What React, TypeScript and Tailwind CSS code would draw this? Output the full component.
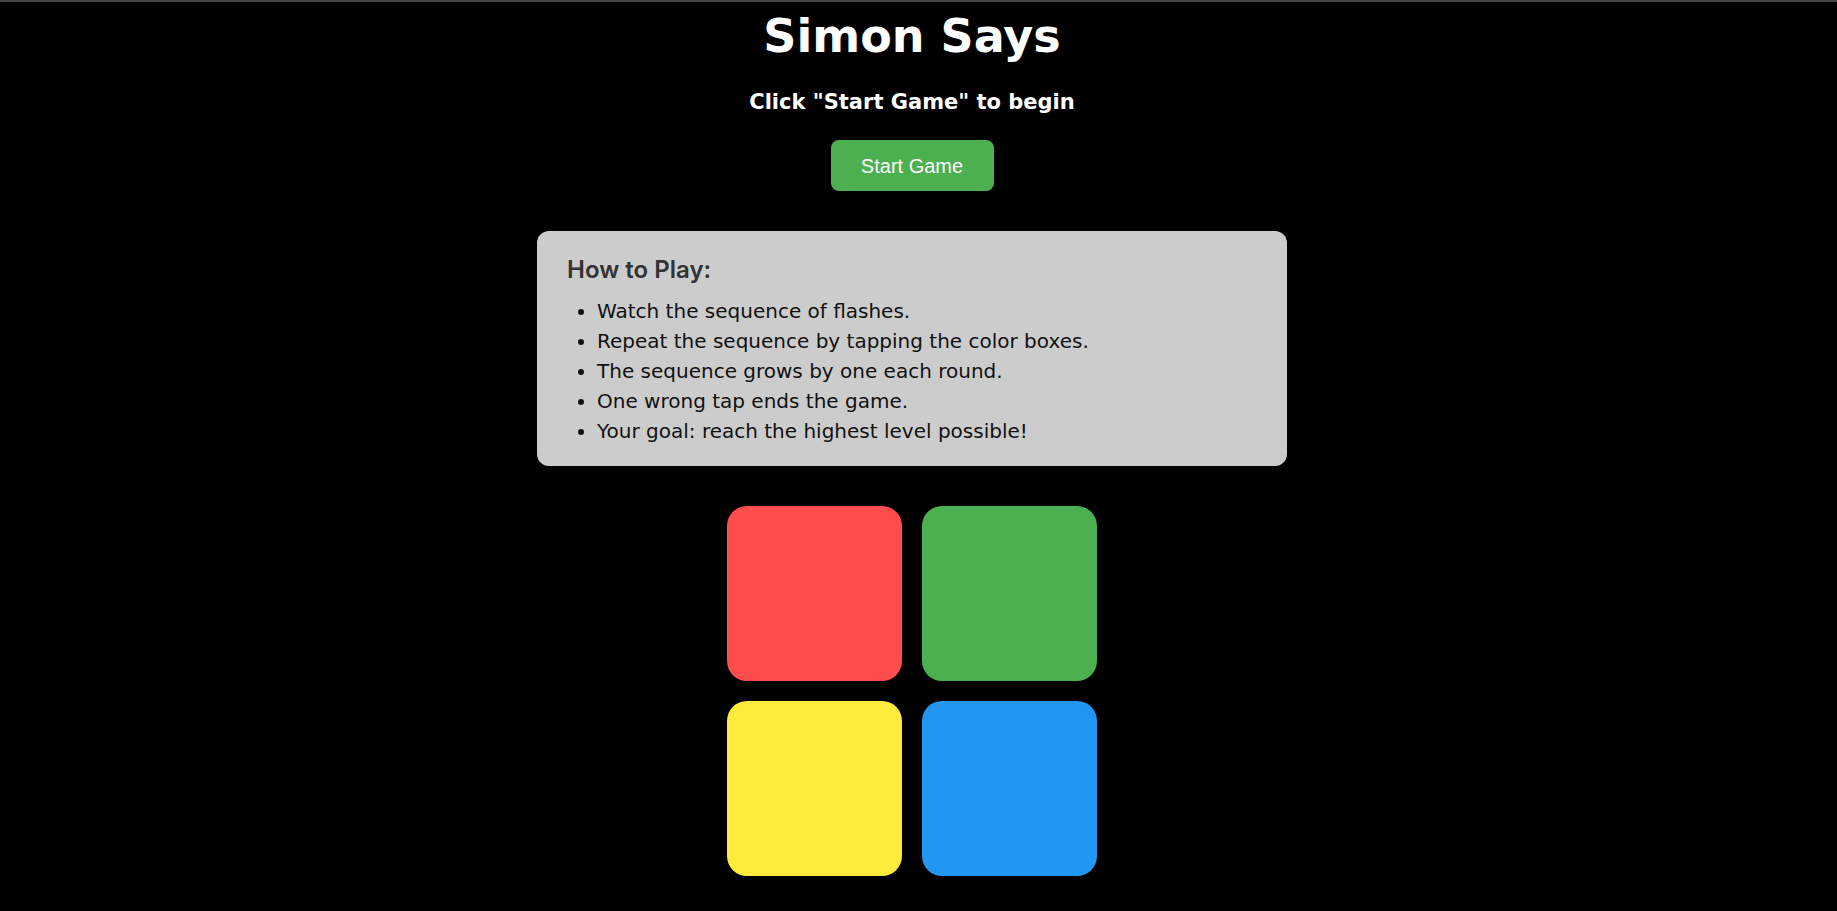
import React from 'react';

const rules = [
  'Watch the sequence of flashes.',
  'Repeat the sequence by tapping the color boxes.',
  'The sequence grows by one each round.',
  'One wrong tap ends the game.',
  'Your goal: reach the highest level possible!',
];

const pads = ['bg-[#ff4d4d]', 'bg-[#4caf50]', 'bg-[#ffeb3b]', 'bg-[#2196f3]'];

export default function App() {
  return (
    <div className="min-h-screen bg-black font-['DejaVu_Sans',sans-serif] text-white">
      <div className="h-[2px] bg-[#474747]" />
      <div className="flex flex-col items-center pr-[13px] pt-[6px]">
        <h1 className="text-[46px] font-bold leading-[56px]">Simon Says</h1>
        <h2 className="mt-[24px] text-[21px] font-bold leading-[28px]">Click "Start Game" to begin</h2>
        <button className="mt-[24px] h-[51px] w-[163px] rounded-lg bg-[#4caf50] font-['Liberation_Sans',Arial,sans-serif] text-[20px] text-white">
          Start Game
        </button>

        {/* How to play */}
        <div className="mt-[40px] w-[750px] rounded-[12px] bg-[#cccccc] px-[30px] pt-[25px] pb-[20px] text-[#111]">
          <h3 className="font-['Inter',sans-serif] text-[24px] font-semibold leading-[28px] text-[#333]">How to Play:</h3>
          <ul className="mt-[12px] list-disc pl-[30px] text-[20px] leading-[30px]">
            {rules.map((r) => (
              <li key={r}>{r}</li>
            ))}
          </ul>
        </div>

        {/* Pads */}
        <div className="mt-[40px] grid grid-cols-2 gap-[20px]">
          {pads.map((c) => (
            <div key={c} className={`h-[175px] w-[175px] rounded-[20px] ${c}`} />
          ))}
        </div>
      </div>
    </div>
  );
}
